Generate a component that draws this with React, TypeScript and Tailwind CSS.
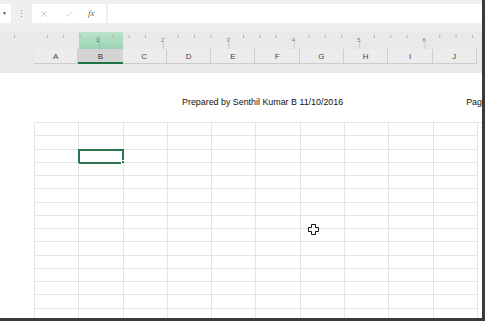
import { X, Check } from 'lucide-react'

const COLS = ['A', 'B', 'C', 'D', 'E', 'F', 'G', 'H', 'I', 'J']
const ROWS = Array.from({ length: 15 }, (_, i) => i)

function Ruler() {
  const ticks = Array.from({ length: 30 }, (_, i) => 31 + (i - 1) * 16.35)
  const nums = [2, 3, 4, 5, 6]
  return (
    <svg width="482" height="17" className="block shrink-0">
      <rect x="0" y="0" width="482" height="17" fill="#e9e9e9" />
      <defs>
        <linearGradient id="rg" x1="0" y1="0" x2="0" y2="1">
          <stop offset="0" stopColor="#b9e2cb" />
          <stop offset="1" stopColor="#9dd3b4" />
        </linearGradient>
      </defs>
      <rect x="79" y="0" width="44" height="17" fill="url(#rg)" />
      {ticks.map((x, i) => (
        <line key={i} x1={x} y1="3" x2={x} y2={i % 4 === 1 ? 3 : 6} stroke="#b0b0b0" strokeWidth="1" />
      ))}
      <line x1="99.5" y1="4" x2="99.5" y2="17" stroke="#8fbfa3" strokeWidth="1" />
      <text x="96" y="10" fontSize="6" fill="#555" fontFamily="Liberation Sans, sans-serif">1</text>
      {nums.map((n, i) => (
        <g key={n}>
          <text x={161 + i * 65.4} y="10" fontSize="6" fill="#777" fontFamily="Liberation Sans, sans-serif">{n}</text>
          <line x1={163.5 + i * 65.4} y1="11" x2={163.5 + i * 65.4} y2="17" stroke="#c8c8c8" strokeWidth="1" />
        </g>
      ))}
    </svg>
  )
}

function FormulaBar() {
  return (
    <div className="flex h-[32px] shrink-0 items-start bg-[#efefef] pt-[4px]">
      <div className="flex h-[19px] w-[11px] items-center justify-end bg-white pr-[4px]">
        <span className="text-[5px] leading-none text-[#555]">▼</span>
      </div>
      <div className="flex h-[19px] w-[21px] flex-col items-center justify-center gap-[2px]">
        <span className="h-[1px] w-[1px] bg-[#9a9a9a]" />
        <span className="h-[1px] w-[1px] bg-[#9a9a9a]" />
        <span className="h-[1px] w-[1px] bg-[#9a9a9a]" />
      </div>
      <div className="flex h-[19px] w-[74px] items-center bg-white pl-[7px]">
        <X size={10} strokeWidth={1.5} className="text-[#a8a8a8]" />
        <Check size={10} strokeWidth={1.5} className="ml-[15px] text-[#b8b8b8]" />
        <span className="ml-[14px] text-[9px] italic text-[#666] [font-family:'Liberation_Serif',serif]">fx</span>
      </div>
      <div className="ml-[2px] h-[19px] flex-1 bg-white" />
    </div>
  )
}

function Header() {
  return (
    <div className="flex h-[24px] shrink-0 flex-col bg-[#e9e9e9]">
      <div className="flex h-[15px] pl-[34px]">
        {COLS.map((c) => (
          <div
            key={c}
            className={
              c === 'B'
                ? 'flex w-[44.3px] items-center justify-center border-b-2 border-[#217346] bg-[#d4d4d4] pt-[2px] text-[8px] text-[#333]'
                : 'flex w-[44.3px] items-center justify-center border-b border-r border-[#cdcdcd] bg-[#ececec] pt-[2px] text-[8px] text-[#444]'
            }
          >
            {c}
          </div>
        ))}
      </div>
    </div>
  )
}

function Page() {
  return (
    <div className="relative flex min-h-0 flex-1 flex-col overflow-hidden bg-white">
      <div className="flex h-[49px] shrink-0 items-start pt-[23px] text-[8.9px] text-[#111]">
        <span className="ml-[182px]">Prepared by Senthil Kumar B 11/10/2016</span>
        <span className="ml-auto">Pag</span>
      </div>
      <div className="ml-[34px] grid shrink-0 grid-cols-[repeat(10,44.3px)] grid-rows-[repeat(15,13.25px)] border-l border-t border-[#e5e5e5]">
        {ROWS.map((r) =>
          COLS.map((c) => (
            <div key={`${c}${r}`} className="relative border-b border-r border-[#e5e5e5]">
              {r === 2 && c === 'B' && (
                <>
                  <div className="absolute -left-[1px] -top-[1px] h-[15px] w-[46px] border-2 border-[#2f7350]" />
                  <div className="absolute -bottom-[2px] -right-[2px] h-[4px] w-[4px] border border-white bg-[#217346]" />
                </>
              )}
            </div>
          ))
        )}
      </div>
      <svg width="11" height="11" viewBox="0 0 11 11" className="absolute left-[308px] top-[151px]">
        <path
          d="M3.5 0.5h4v3h3v4h-3v3h-4v-3h-3v-4h3z"
          fill="white"
          stroke="#111"
          strokeWidth="1"
        />
      </svg>
    </div>
  )
}

export default function App() {
  return (
    <div className="h-[323px] w-[488px] overflow-hidden bg-white [font-family:'Liberation_Sans',Arial,sans-serif]">
      <div className="flex h-[321px] w-[485px] flex-col overflow-hidden border-b-[3px] border-r-[3px] border-[#3a3a3a]">
        <FormulaBar />
        <Ruler />
        <Header />
        <Page />
      </div>
    </div>
  )
}
